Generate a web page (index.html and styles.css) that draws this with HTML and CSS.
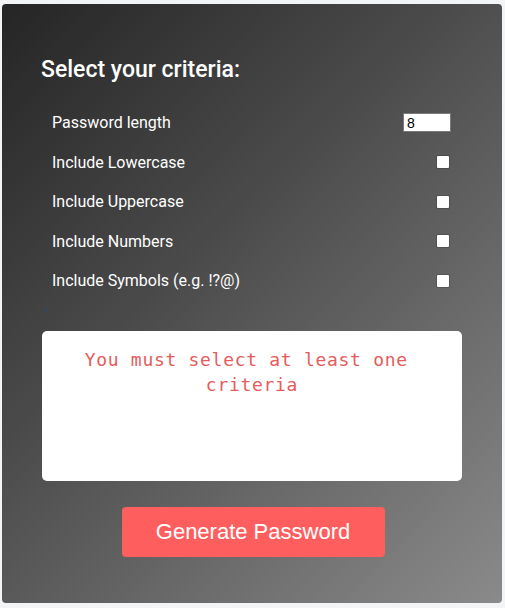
FILE: index.html
```html
<!DOCTYPE html>
<html>
<head>
<meta charset="utf-8">
<title>Password Generator</title>
<link rel="stylesheet" href="styles.css">
</head>
<body>
<div class="card">
  <h2 class="title">Select your criteria:</h2>
  <div class="criteria">
    <div class="row"><label>Password length</label><input class="len" type="text" value="8"></div>
    <div class="row"><label>Include Lowercase</label><span class="box"></span></div>
    <div class="row"><label>Include Uppercase</label><span class="box"></span></div>
    <div class="row"><label>Include Numbers</label><span class="box"></span></div>
    <div class="row"><label>Include Symbols (e.g. !?@)</label><span class="box"></span></div>
  </div>
  <div class="mark"><svg width="7" height="7" viewBox="0 0 7 7"><path d="M1 1 L5 3.5 L1 6" fill="none" stroke="#2f4a6e" stroke-width="1.2"/></svg></div>
  <div class="output">
    <p class="error">You must select at least one&nbsp;<br>criteria</p>
  </div>
  <div class="actions">
    <button class="generate">Generate Password</button>
  </div>
</div>
</body>
</html>
```
FILE: styles.css
```css
html, body {
  margin: 0;
  padding: 0;
}
body {
  background: #f3f4f6;
  font-family: Roboto, "Liberation Sans", Arial, sans-serif;
}
.card {
  box-sizing: border-box;
  width: 500px;
  height: 599px;
  margin: 4px 0 0 2px;
  padding: 52px 40px 0 40px;
  border-radius: 4px;
  background: linear-gradient(135deg, #252525 0%, #4a4a4a 40%, #6a6a6a 70%, #8a8a8a 100%);
  display: flex;
  flex-direction: column;
}
.title {
  margin: 0 0 0 -1px;
  color: #fff;
  font-size: 23px;
  font-weight: 500;
  line-height: 27px;
}
.criteria {
  margin: 20px 0 0 0;
  padding: 0 14px 0 10px;
  display: flex;
  flex-direction: column;
}
.row {
  height: 39.5px;
  display: flex;
  align-items: center;
  justify-content: space-between;
  color: #fff;
  font-size: 16px;
}
.len {
  box-sizing: border-box;
  width: 48px;
  height: 19px;
  margin-right: -3px;
  padding: 0 0 0 3px;
  border: 1px solid #7a7a7a;
  background: #fff;
  font-family: "Liberation Sans", Arial, sans-serif;
  font-size: 14px;
  color: #000;
}
.box {
  width: 12px;
  height: 12px;
  margin-right: -1px;
  background: #fff;
  border-radius: 1px;
  box-shadow: 0 0 0 1px rgba(0,0,0,0.15);
}
.mark {
  height: 7px;
  margin: 5px 0 0 1px;
  line-height: 0;
  opacity: 0.6;
}
.output {
  box-sizing: border-box;
  height: 150px;
  margin: 18px 0 0 0;
  width: 420px;
  background: #fff;
  border-radius: 5px;
  padding: 16px 20px 0;
}
.error {
  margin: 0;
  color: #e65c5c;
  font-family: "DejaVu Sans Mono", "Liberation Mono", monospace;
  font-size: 18px;
  line-height: 25px;
  letter-spacing: 0.7px;
  text-align: center;
}
.actions {
  display: flex;
  justify-content: center;
  margin-top: 26px;
}
.generate {
  width: 263px;
  height: 50px;
  border: none;
  border-radius: 4px;
  background: #ff5e5e;
  color: #fff;
  font-family: "Liberation Sans", Arial, sans-serif;
  font-size: 22px;
  padding: 0;
  margin-left: 2px;
}
```
